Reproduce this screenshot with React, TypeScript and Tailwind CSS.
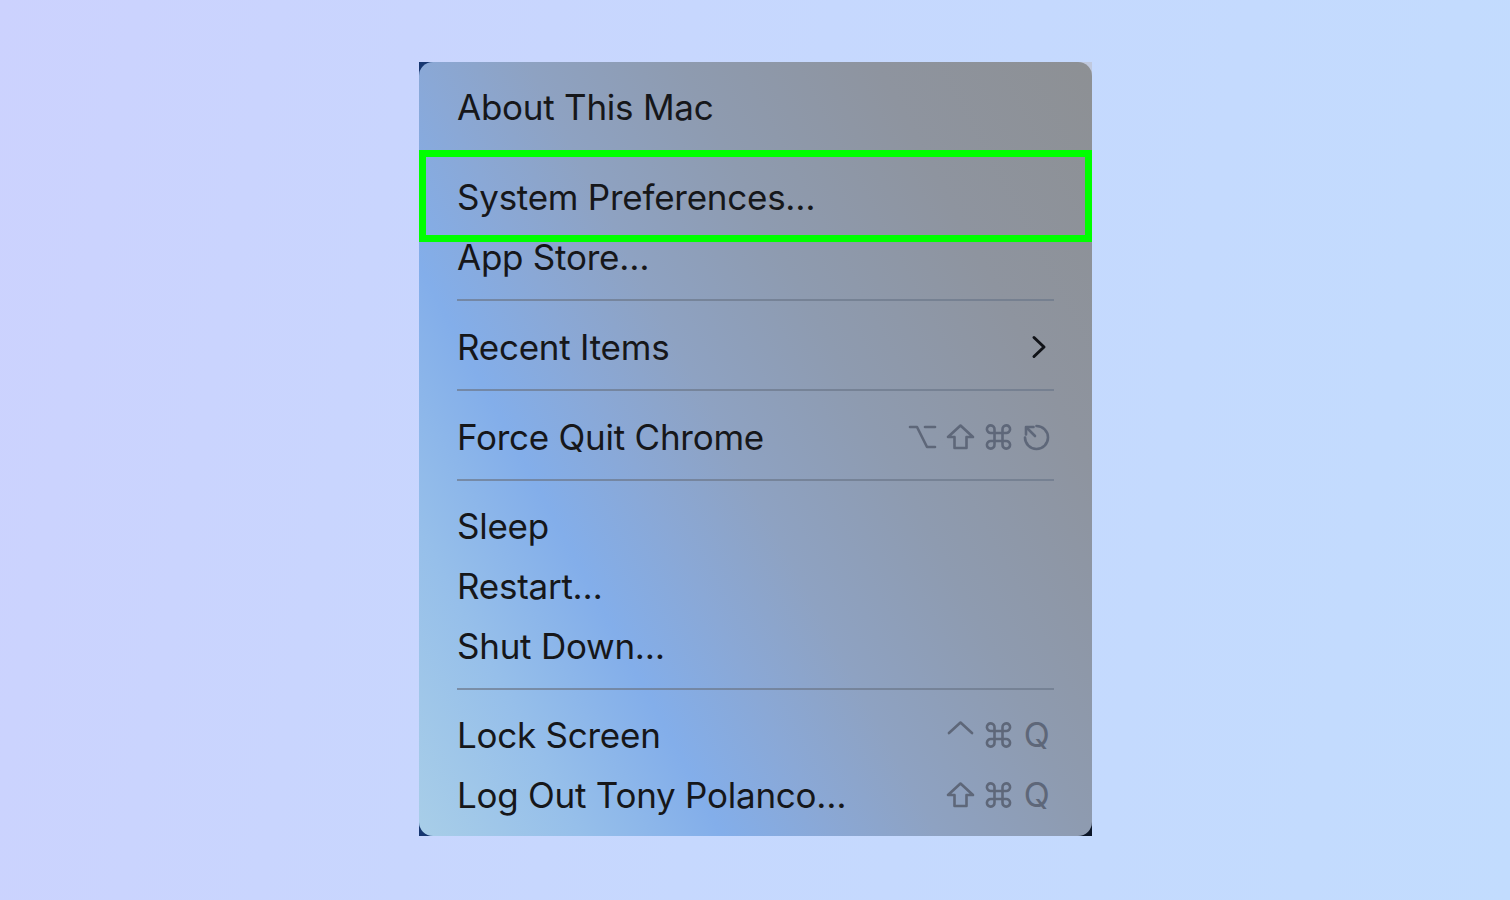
import React from "react";

const G = "#5e6779";

function OptionKey() {
  return (
    <svg width="29" height="28" viewBox="0 0 29 28" fill="none" stroke={G} strokeWidth="2.6" strokeLinecap="round" strokeLinejoin="round">
      <path d="M2 4 H9 L19 24 H27" />
      <path d="M17 4 H27" />
    </svg>
  );
}
function ShiftKey() {
  return (
    <svg width="29" height="28" viewBox="0 0 29 28" fill="none" stroke={G} strokeWidth="2.6" strokeLinejoin="round">
      <path d="M14.5 2.5 L27 14 H20.5 V25 H8.5 V14 H2 Z" />
    </svg>
  );
}
function CmdKey() {
  return (
    <svg width="29" height="28" viewBox="0 0 28 28" fill="none" stroke={G} strokeWidth="2.6" strokeLinejoin="round">
      <path d="M10 10 V6.5 A3.8 3.8 0 1 0 6.5 10 H21.5 A3.8 3.8 0 1 0 18 6.5 V21.5 A3.8 3.8 0 1 0 21.5 18 H6.5 A3.8 3.8 0 1 0 10 21.5 Z" />
    </svg>
  );
}
function EscKey() {
  return (
    <svg width="29" height="28" viewBox="0 0 29 28" fill="none" stroke={G} strokeWidth="2.6" strokeLinecap="round" strokeLinejoin="round">
      <path d="M14.5 3 A11.5 11.5 0 1 1 3 14.5" />
      <path d="M4.5 4.5 L13 13" />
      <path d="M4 11.5 V4 H11.5" />
    </svg>
  );
}
function CtrlKey() {
  return (
    <svg width="29" height="28" viewBox="0 0 29 28" fill="none" stroke={G} strokeWidth="2.6" strokeLinecap="round" strokeLinejoin="round">
      <path d="M3 12 L14.5 1.5 L26 12" />
    </svg>
  );
}
function QKey() {
  return (
    <div className="w-[29px] h-[28px] flex items-center justify-center text-[34px] leading-none text-[#5e6779]">Q</div>
  );
}
function Chevron() {
  return (
    <svg width="16" height="24" viewBox="0 0 16 24" fill="none" stroke="#111318" strokeWidth="3" strokeLinecap="round" strokeLinejoin="round" className="mr-[4px]">
      <path d="M3 2.5 L13 12 L3 21.5" />
    </svg>
  );
}

function Row({ label, right }: { label: string; right?: React.ReactNode }) {
  return (
    <div className="h-[60px] flex items-center justify-between pl-[38px] pr-[41px]">
      <span>{label}</span>
      {right ? <div className="flex items-center gap-[9px]">{right}</div> : null}
    </div>
  );
}

function Sep({ h = "h-[30px]", pt = "pt-[12px]" }: { h?: string; pt?: string }) {
  return (
    <div className={`${h} ${pt} flex items-start px-[38px]`}>
      <div className="h-[2px] w-full bg-[#6c778a]/70" />
    </div>
  );
}

export default function App() {
  return (
    <div
      className="w-[1510px] h-[900px] flex items-start justify-center pt-[62px] bg-[linear-gradient(100deg,#ccd2fe_0%,#c6d8fe_50%,#c2dcfe_100%)]"
      style={{ fontFamily: "Inter, 'Noto Sans', sans-serif" }}
    >
      <div className="ml-[1px] w-[673px] h-[774px] bg-[conic-gradient(#c0c9de_0_25%,#0c1628_25%_50%,#173770_50%_75%,#173770_75%_100%)]">
        <div className="relative w-full h-full rounded-[14px] overflow-hidden bg-[linear-gradient(62deg,#a8cee8_0%,#96bfea_15%,#83aeea_28%,#8aa8d6_38%,#8ea2c2_48%,#8e9bb0_62%,#8e949f_80%,#8d9094_100%)] pt-[15px] text-[35px] leading-none text-[#16171a] tracking-[-0.25px]">
          <Row label="About This Mac" />
          <Sep pt="pt-[16px]" />
          <Row label="System Preferences…" />
          <Row label="App Store…" />
          <Sep />
          <Row label="Recent Items" right={<Chevron />} />
          <Sep />
          <Row label="Force Quit Chrome" right={<><OptionKey /><ShiftKey /><CmdKey /><EscKey /></>} />
          <Sep h="h-[29px]" />
          <Row label="Sleep" />
          <Row label="Restart…" />
          <Row label="Shut Down…" />
          <Sep h="h-[29px]" />
          <Row label="Lock Screen" right={<><CtrlKey /><CmdKey /><QKey /></>} />
          <Row label="Log Out Tony Polanco…" right={<><ShiftKey /><CmdKey /><QKey /></>} />
          <div className="absolute left-0 right-0 top-[88px] h-[92px] border-[7px] border-[#00ff00]" />
        </div>
      </div>
    </div>
  );
}
